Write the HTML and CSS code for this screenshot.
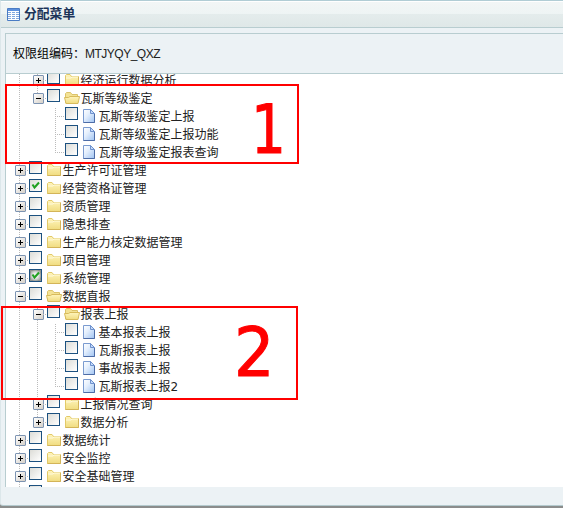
FILE: index.html
```
<!DOCTYPE html>
<html lang="zh-CN">
<head>
<meta charset="utf-8">
<title>分配菜单</title>
<link rel="stylesheet" href="styles.css">
</head>
<body>
<svg class="defs" width="0" height="0">
  <defs>
    <linearGradient id="gold" x1="0" y1="0" x2="0" y2="1"><stop offset="0" stop-color="#fff5bd"/><stop offset="1" stop-color="#f0dc80"/></linearGradient>
    <linearGradient id="paper" x1="0" y1="0" x2="1" y2="1"><stop offset="0" stop-color="#fff"/><stop offset=".4" stop-color="#e4effd"/><stop offset="1" stop-color="#9fc3f2"/></linearGradient>
    <symbol id="folder" viewBox="0 0 16 16"><path d="M.5 13.500v-10l1-1h3.500l1.500 2h7v9z" fill="url(#gold)" stroke="#e2c968"/><path d="M1 6h5l1-1h6" fill="none" stroke="#fffadc"/><path d="M.5 13.500h13V5" fill="none" stroke="#d3b458"/></symbol>
    <symbol id="open" viewBox="0 0 16 16"><path d="M1.500 13v-9.500l1-1h4l1.500 2h5.500v8.500z" fill="#f3e294" stroke="#dcc36a"/><path d="M.5 7.500h4l1.500-1h9.500l-1.500 7h-12z" fill="url(#gold)" stroke="#d8bb5c"/></symbol>
    <symbol id="file" viewBox="0 0 16 16"><path d="M.5 1.500h7l4 4v9h-11z" fill="url(#paper)" stroke="#7a9bd0"/><path d="M7.500 1.500v4h4z" fill="#c4dafa" stroke="#6e91cd"/><path d="M.5 14.500h11V6" fill="none" stroke="#4d6ca6"/></symbol>
    <symbol id="tick" viewBox="0 0 11 11"><path d="M2.500 4.500 4.500 7.500 9 2.500" fill="none" stroke="#21a121" stroke-width="2"/></symbol>
  </defs>
</svg>
<div class="window">
  <header class="titlebar">
    <svg class="grid-icon" viewBox="0 0 13 13"><path fill="#fff" stroke="#4a7cc4" d="M.5.5h12v12H.5z"/><path fill="#5d91dd" d="M1 1h11v2H1z"/><path stroke="#82a9df" fill="none" d="M1 4.500h11M1 6.500h11M1 8.500h11M1 10.500h11"/><path stroke="#fff" d="M4.500 3v9M8.500 3v9"/></svg>
    <h1>分配菜单</h1>
  </header>
  <main class="panel">
    <div class="toolbar">权限组编码：<span class="code">MTJYQY_QXZ</span></div>
    <div class="tree">
      <div class="row"><i class="line"></i><i class="line exp plus"></i><i class="check"></i><svg class="icon"><use href="#folder"/></svg><span>经济运行数据分析</span></div>
      <div class="row"><i class="line"></i><i class="line end exp"></i><i class="check"></i><svg class="icon"><use href="#open"/></svg><span>瓦斯等级鉴定</span></div>
      <div class="row"><i class="line"></i><i class="blank"></i><i class="line elbow"></i><i class="check"></i><svg class="icon"><use href="#file"/></svg><span>瓦斯等级鉴定上报</span></div>
      <div class="row"><i class="line"></i><i class="blank"></i><i class="line elbow"></i><i class="check"></i><svg class="icon"><use href="#file"/></svg><span>瓦斯等级鉴定上报功能</span></div>
      <div class="row"><i class="line"></i><i class="blank"></i><i class="line end elbow"></i><i class="check"></i><svg class="icon"><use href="#file"/></svg><span>瓦斯等级鉴定报表查询</span></div>
      <div class="row"><i class="line exp plus"></i><i class="check"></i><svg class="icon"><use href="#folder"/></svg><span>生产许可证管理</span></div>
      <div class="row"><i class="line exp plus"></i><i class="check"><svg><use href="#tick"/></svg></i><svg class="icon"><use href="#folder"/></svg><span>经营资格证管理</span></div>
      <div class="row"><i class="line exp plus"></i><i class="check"></i><svg class="icon"><use href="#folder"/></svg><span>资质管理</span></div>
      <div class="row"><i class="line exp plus"></i><i class="check"></i><svg class="icon"><use href="#folder"/></svg><span>隐患排查</span></div>
      <div class="row"><i class="line exp plus"></i><i class="check"></i><svg class="icon"><use href="#folder"/></svg><span>生产能力核定数据管理</span></div>
      <div class="row"><i class="line exp plus"></i><i class="check"></i><svg class="icon"><use href="#folder"/></svg><span>项目管理</span></div>
      <div class="row"><i class="line exp plus"></i><i class="check partial"><svg><use href="#tick"/></svg></i><svg class="icon"><use href="#folder"/></svg><span>系统管理</span></div>
      <div class="row"><i class="line exp"></i><i class="check"></i><svg class="icon"><use href="#open"/></svg><span>数据直报</span></div>
      <div class="row"><i class="line"></i><i class="line exp"></i><i class="check"></i><svg class="icon"><use href="#open"/></svg><span>报表上报</span></div>
      <div class="row"><i class="line"></i><i class="line"></i><i class="line elbow"></i><i class="check"></i><svg class="icon"><use href="#file"/></svg><span>基本报表上报</span></div>
      <div class="row"><i class="line"></i><i class="line"></i><i class="line elbow"></i><i class="check"></i><svg class="icon"><use href="#file"/></svg><span>瓦斯报表上报</span></div>
      <div class="row"><i class="line"></i><i class="line"></i><i class="line elbow"></i><i class="check"></i><svg class="icon"><use href="#file"/></svg><span>事故报表上报</span></div>
      <div class="row"><i class="line"></i><i class="line"></i><i class="line end elbow"></i><i class="check"></i><svg class="icon"><use href="#file"/></svg><span>瓦斯报表上报<b>2</b></span></div>
      <div class="row"><i class="line"></i><i class="line exp plus"></i><i class="check"></i><svg class="icon"><use href="#folder"/></svg><span>上报情况查询</span></div>
      <div class="row"><i class="line"></i><i class="line end exp plus"></i><i class="check"></i><svg class="icon"><use href="#folder"/></svg><span>数据分析</span></div>
      <div class="row"><i class="line exp plus"></i><i class="check"></i><svg class="icon"><use href="#folder"/></svg><span>数据统计</span></div>
      <div class="row"><i class="line exp plus"></i><i class="check"></i><svg class="icon"><use href="#folder"/></svg><span>安全监控</span></div>
      <div class="row"><i class="line exp plus"></i><i class="check"></i><svg class="icon"><use href="#folder"/></svg><span>安全基础管理</span></div>
      <div class="row"><i class="line"></i><i class="check"></i></div>
    </div>
  </main>
</div>
<div class="mark first"><span>1</span></div>
<div class="mark second"><span>2</span></div>
</body>
</html>
```
FILE: styles.css
```
* { box-sizing: border-box; }
body {
  margin: 0;
  height: 508px;
  overflow: hidden;
  position: relative;
  background: #8b8d8c;
  font: 12px/18px "Noto Sans CJK SC", sans-serif;
  color: #222;
}
.defs { position: absolute; }
.window {
  height: 506px;
  background: #ecf2f5;
  border-top: 1px solid #b1cdd5;
  border-bottom: 1px solid #b4cace;
  border-left: 1px solid #dce7ea;
  border-bottom-left-radius: 3px;
}
.titlebar {
  height: 27px;
  display: flex;
  align-items: center;
  gap: 4px;
  padding-left: 6px;
  border-top: 1px solid #fff;
  border-bottom: 1px solid #b8cdd0;
  background: linear-gradient(#f2f6f6 0, #eef4f4 12px, #e4ecec 12px, #dfe8e8 100%);
}
.grid-icon { width: 13px; height: 13px; }
h1 {
  margin: 0 0 4px;
  font-size: 12.800px;
  line-height: 18px;
  font-weight: 700;
  color: #1b3358;
}
.panel {
  margin: 5px 0 0 4px;
  height: 454px;
  display: flex;
  flex-direction: column;
  border-top: 1px solid #b8cdd0;
  border-left: 1px solid #b8cdd0;
  background: #fff;
}
.toolbar {
  height: 40px;
  flex: none;
  padding: 10px 0 0 7px;
  background: #ecf2f5;
  border-bottom: 1px solid #b8cdd0;
  color: #000;
}
.code { font-family: "Liberation Sans", sans-serif; color: #222; letter-spacing: -.5px; }
.tree {
  flex: 1;
  min-height: 0;
  overflow: hidden;
  padding-left: 4px;
}
.row {
  height: 18px;
  display: flex;
  white-space: nowrap;
}
.row:first-child { margin-top: -3px; }
.row b { font: 12px "DejaVu Sans", sans-serif; }
.line, .blank { width: 18px; height: 18px; flex: none; }
.line { background: repeating-linear-gradient(transparent 0 1px, #bbb 1px 2px) 9px 0 / 1px 18px no-repeat; }
.line.end { background-size: 1px 10px; }
.elbow, .exp { display: grid; align-items: center; }
.elbow::after {
  content: "";
  height: 1px;
  margin: 1px 0 0 9px;
  background: repeating-linear-gradient(90deg, #bbb 0 1px, transparent 1px 2px);
}
.exp { grid-template-columns: 9px 4px; padding-left: 5px; }
.exp::before {
  content: "";
  width: 9px;
  height: 9px;
  margin-top: 1px;
  border: 1px solid #7d94b2;
  border-radius: 1px;
  background:
    linear-gradient(#000, #000) center / 5px 1px no-repeat,
    linear-gradient(135deg, #fff, #d5d0c8);
}
.exp.plus::before {
  background:
    linear-gradient(#000, #000) center / 5px 1px no-repeat,
    linear-gradient(#000, #000) center / 1px 5px no-repeat,
    linear-gradient(135deg, #fff, #d5d0c8);
}
.exp::after {
  content: "";
  height: 1px;
  margin-top: 1px;
  background: repeating-linear-gradient(90deg, transparent 0 1px, #bbb 1px 2px);
}
.check {
  width: 13px;
  height: 13px;
  flex: none;
  margin-left: 1px;
  border: 1px solid #1c5180;
  background: linear-gradient(135deg, #dcdcd7, #fff);
}
.check svg { display: block; width: 11px; height: 11px; }
.check.partial { background: #a5aaa5; box-shadow: inset 0 0 0 1px #8f9490; }
.partial svg { background: radial-gradient(#eee 30%, transparent 75%); }
.icon {
  width: 16px;
  height: 16px;
  flex: none;
  margin: 1px 0 0 5px;
}
.row span { margin-left: -.5px; }
.row .icon:has([href="#open"]) { margin-left: 4px; margin-right: 1px; }
.mark { position: absolute; border: 2px solid #f00; }
.mark span {
  position: absolute;
  color: #f00;
  font: 67px/67px "DejaVu Sans", sans-serif;
  -webkit-text-stroke: .5px #f00;
  transform-origin: left top;
}
.first { left: 5px; top: 84px; width: 294px; height: 80px; }
.first span { left: 244px; top: 11px; transform: scaleX(.82); -webkit-text-stroke-width: 1px; }
.second { left: 1px; top: 306px; width: 297px; height: 94px; }
.second span { left: 231px; top: 12px; transform: scaleX(.95); -webkit-text-stroke-width: 1px; }
```
